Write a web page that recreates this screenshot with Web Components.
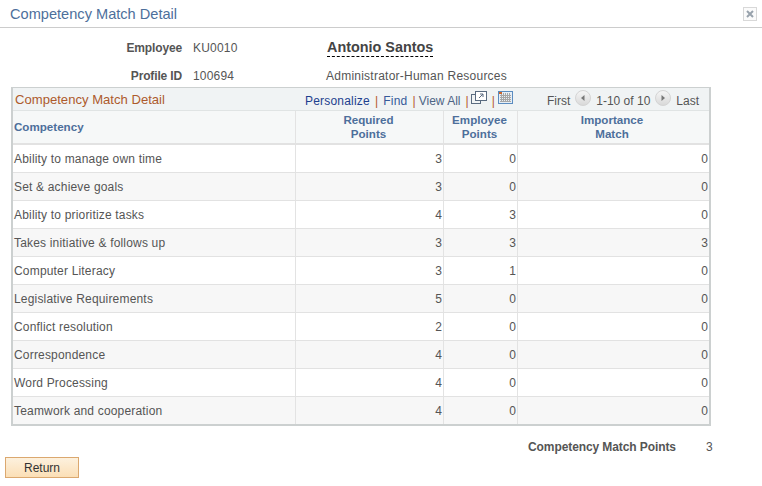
<!DOCTYPE html>
<html>
<head>
<meta charset="utf-8">
<title>Competency Match Detail</title>
<style>
  html, body {margin:0; padding:0; background:#fff;}
  body {font:12px "Liberation Sans", Arial, sans-serif; color:#555; width:762px; height:486px; overflow:hidden;}
</style>
</head>
<body>
<ps-titlebar>Competency Match Detail</ps-titlebar>
<ps-header></ps-header>
<ps-grid title="Competency Match Detail">
  <ps-row name="Ability to manage own time" req="3" emp="0" imp="0"></ps-row>
  <ps-row name="Set &amp; achieve goals" req="3" emp="0" imp="0"></ps-row>
  <ps-row name="Ability to prioritize tasks" req="4" emp="3" imp="0"></ps-row>
  <ps-row name="Takes initiative &amp; follows up" req="3" emp="3" imp="3"></ps-row>
  <ps-row name="Computer Literacy" req="3" emp="1" imp="0"></ps-row>
  <ps-row name="Legislative Requirements" req="5" emp="0" imp="0"></ps-row>
  <ps-row name="Conflict resolution" req="2" emp="0" imp="0"></ps-row>
  <ps-row name="Correspondence" req="4" emp="0" imp="0"></ps-row>
  <ps-row name="Word Processing" req="4" emp="0" imp="0"></ps-row>
  <ps-row name="Teamwork and cooperation" req="4" emp="0" imp="0"></ps-row>
</ps-grid>
<ps-total label="Competency Match Points" value="3"></ps-total>
<ps-button>Return</ps-button>

<script>
// columns of the grid, shared by header and rows
const COLS = '283px 148px 74px 191px';

customElements.define('ps-titlebar', class extends HTMLElement {
    constructor() {
	super();
	this.attachShadow({mode: 'open'}).innerHTML = `
<style>
  :host {display:flex; align-items:center; justify-content:space-between; box-sizing:border-box; height:28px; padding:0 5px 0 10px; border-bottom:1px solid #ccc; font-size:14.6px; color:#4d6f9b;}
  #close {width:12px; height:12px; border:1px solid #d8d8d8; display:flex; align-items:center; justify-content:center; background:#fbfbfb;}
</style>
<span><slot></slot></span>
<div id="close"><svg width="8" height="8" viewBox="0 0 8 8"><path d="M1 1L7 7M7 1L1 7" stroke="#98a2ac" stroke-width="2" fill="none"/></svg></div>`;
    }
});

customElements.define('ps-header', class extends HTMLElement {
    constructor() {
	super();
	this.attachShadow({mode: 'open'}).innerHTML = `
<style>
  :host {display:grid; grid-template-columns:182px 124px auto; grid-template-rows:28px 28px; column-gap:11px; padding-top:6px; height:59px; box-sizing:border-box; align-items:center;}
  b {text-align:right; letter-spacing:-.15px;}
  .id {letter-spacing:.2px;}
  #name {font-size:14.4px; font-weight:bold; color:#444; justify-self:start; margin-left:-1px; border-bottom:1px dashed #000; line-height:14px; padding-bottom:2px;}
  #job {margin-left:-2px; letter-spacing:.24px;}
</style>
<b>Employee</b><span class="id">KU0010</span><span id="name">Antonio Santos</span>
<b>Profile ID</b><span class="id">100694</span><span id="job">Administrator-Human Resources</span>`;
    }
});

customElements.define('ps-grid', class extends HTMLElement {
    constructor() {
	super();
	this.attachShadow({mode: 'open'}).innerHTML = `
<style>
  :host {display:block; box-sizing:border-box; width:700px; margin:0 0 0 11px; border:solid #ccd0d0; border-width:1px 2px 2px 2px;}
  #nav {display:flex; align-items:center; height:23px; background:#f0f3f4; border-bottom:1px solid #e0e4e4; box-sizing:border-box; padding:0 10px 0 2px; color:#555;}
  #title {font-size:13.1px; color:#ad5a2c; width:290px;}
  .bar {display:flex; align-items:center; padding-top:4px; letter-spacing:.2px;}
  a {color:#1d3f8f;}
  i {font-style:normal; color:#b5562b; margin:0 5px;}
  svg {display:block;}
  #all {color:#4d6485; margin-left:-2px; letter-spacing:0;}
  #pager {margin-left:auto; display:flex; align-items:center; gap:5px; padding-top:4px;}
  #heads {display:grid; grid-template-columns:${COLS}; height:34px; background:#f6f8f8; border-bottom:2px solid #e2e2e2; box-sizing:border-box; font-weight:bold; color:#4d6f9b; font-size:11.6px; line-height:14px;}
  #heads div {display:flex; align-items:center; justify-content:center; text-align:center; border-right:1px solid #e3e3e3; padding:0 2px 1px 0;}
  #heads #c0 {justify-content:flex-start; padding-left:1px;}
  #heads #c3 {border-right:0; padding-right:3px;}
</style>
<div id="nav">
  <span id="title">${this.getAttribute('title')}</span>
  <span class="bar">
    <a>Personalize</a><i>|</i><a style="color:#355a9a">Find</a><i>|</i><span id="all">View All</span><i style="margin-right:2px">|</i>
    <svg width="16" height="13" viewBox="0 0 16 13" style="margin:-7px 0 0 0"><rect x="0.5" y="3.5" width="9" height="9" fill="none" stroke="#5a6b80"/><rect x="4.5" y="0.5" width="11" height="9" fill="#fff" stroke="#5a6b80"/><path d="M8 7L12 3M9 3H12V6" stroke="#5a6b80" fill="none"/></svg>
    <i>|</i>
    <svg width="15" height="13" viewBox="0 0 15 13" style="margin:-7px 0 0 -2px"><rect x="0.5" y="0.5" width="14" height="12" fill="#e6eef6" stroke="#5b8cc0"/><path d="M2 4.5H13M2 6.5H13M2 8.5H13M2 10.5H13M3.5 2V11M5.5 2V11M7.5 2V11M9.5 2V11M11.5 2V11" stroke="#a6a6a6" fill="none"/><rect x="1" y="1" width="3" height="2" fill="#c9642b"/></svg>
  </span>
  <span id="pager">
    <span>First</span>
    <svg width="16" height="16" viewBox="0 0 16 16" style="margin:-7px 0 0 0"><defs><linearGradient id="btn" x1="0" y1="0" x2="0" y2="1"><stop offset="0" stop-color="#f6f6f6"/><stop offset="1" stop-color="#d8d8d8"/></linearGradient></defs><circle cx="8" cy="8" r="7.5" fill="url(#btn)" stroke="#d4d4d4"/><path d="M9.5 5V11L6 8Z" fill="#777"/></svg>
    <span>1-10 of 10</span>
    <svg width="16" height="16" viewBox="0 0 16 16" style="margin:-7px 0 0 0"><circle cx="8" cy="8" r="7.5" fill="url(#btn)" stroke="#d4d4d4"/><path d="M6.5 5V11L10 8Z" fill="#777"/></svg>
    <span>Last</span>
  </span>
</div>
<div id="heads">
  <div id="c0">Competency</div><div>Required<br>Points</div><div>Employee<br>Points</div><div id="c3">Importance<br>Match</div>
</div>
<slot></slot>`;
    }
});

customElements.define('ps-row', class extends HTMLElement {
    constructor() {
	super();
	const root = this.attachShadow({mode: 'open'});
	root.innerHTML = `
<style>
  :host {display:grid; grid-template-columns:${COLS}; height:28px; box-sizing:border-box; border-top:1px solid #e2e2e2; background:#fff;}
  :host(:first-child) {border-top:0; height:27px;}
  :host(:nth-child(even)) {background:#f7f7f7;}
  div {display:flex; align-items:center; justify-content:flex-end; padding:0 1px 0 0; border-right:1px solid #e3e3e3; box-sizing:border-box;}
  #n {justify-content:flex-start; padding-left:1px; letter-spacing:.18px;}
  #i {border-right:0;}
</style>
<div id="n"></div><div id="r"></div><div id="e"></div><div id="i"></div>`;
    }
    connectedCallback() {
	const s = this.shadowRoot;
	s.getElementById('n').textContent = this.getAttribute('name');
	s.getElementById('r').textContent = this.getAttribute('req');
	s.getElementById('e').textContent = this.getAttribute('emp');
	s.getElementById('i').textContent = this.getAttribute('imp');
    }
});

customElements.define('ps-total', class extends HTMLElement {
    constructor() {
	super();
	this.attachShadow({mode: 'open'}).innerHTML = `
<style>
  :host {display:flex; height:20px; align-items:center; padding:11px 0 0 528px;}
  b {width:178px; letter-spacing:-.09px;}
</style>
<b>${this.getAttribute('label')}</b><span>${this.getAttribute('value')}</span>`;
    }
});

customElements.define('ps-button', class extends HTMLElement {
    constructor() {
	super();
	this.attachShadow({mode: 'open'}).innerHTML = `
<style>
  :host {display:flex; align-items:center; justify-content:center; box-sizing:border-box; width:74px; height:21px; margin:0 0 0 5px; border:1px solid #dba86f; background:linear-gradient(#fdf1de,#fbdfb6); color:#333;}
</style>
<slot></slot>`;
    }
});
</script>
</body>
</html>
